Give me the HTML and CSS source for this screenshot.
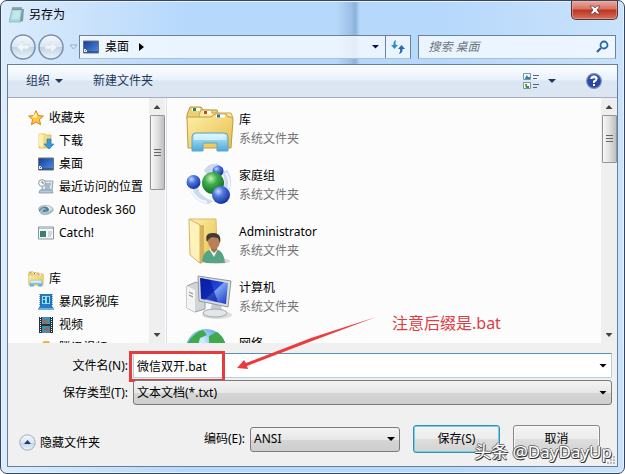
FILE: index.html
```
<!DOCTYPE html>
<html lang="zh-CN">
<head>
<meta charset="utf-8">
<title>另存为</title>
<link rel="stylesheet" href="styles.css">
</head>
<body>
<svg class="defs" aria-hidden="true">
  <defs>
    <linearGradient id="gold" x1="0" y1="0" x2="1" y2="1"><stop offset="0" stop-color="#fff0a8"/><stop offset="1" stop-color="#e6bd4c"/></linearGradient>
    <linearGradient id="aqua" x1="0" y1="0" x2="0" y2="1"><stop offset="0" stop-color="#c9effa"/><stop offset="1" stop-color="#4ba9dc"/></linearGradient>
    <linearGradient id="screen" x1="0" y1="0" x2="1" y2="1"><stop offset="0" stop-color="#0a22a8"/><stop offset=".5" stop-color="#2448d8"/><stop offset=".52" stop-color="#7ea4f6"/><stop offset="1" stop-color="#1434c4"/></linearGradient>
    <linearGradient id="desk" x1="0" y1="0" x2="1" y2="1"><stop offset="0" stop-color="#173c8c"/><stop offset="1" stop-color="#4d90ee"/></linearGradient>
    <radialGradient id="blueball" cx=".35" cy=".3" r=".7"><stop offset="0" stop-color="#c4d8ff"/><stop offset=".4" stop-color="#4f78dc"/><stop offset="1" stop-color="#1735a0"/></radialGradient>
    <radialGradient id="greenball" cx=".4" cy=".3" r=".7"><stop offset="0" stop-color="#c6f2bc"/><stop offset=".4" stop-color="#3fae4a"/><stop offset="1" stop-color="#0c6a22"/></radialGradient>
    <radialGradient id="globe" cx=".4" cy=".3" r=".8"><stop offset="0" stop-color="#d8f2ff"/><stop offset=".6" stop-color="#4a9ae0"/><stop offset="1" stop-color="#16509c"/></radialGradient>
    <linearGradient id="glass" x1="0" y1="0" x2="0" y2="1"><stop offset="0" stop-color="#f4f8fc"/><stop offset=".5" stop-color="#dbe6f2"/><stop offset=".52" stop-color="#c3d3e5"/><stop offset="1" stop-color="#edf5fb"/></linearGradient>
    <symbol id="library" viewBox="0 0 48 48">
      <path d="M1 10 4 2h11l2 3h14l1 4v5H1z" fill="#ecd078" stroke="#b9963e"/>
      <path d="M6 3h8v3H6z" fill="#fff"/><path d="M7 3h3v3H7z" fill="#2d8a3c"/>
      <path d="M13 10l2-5h9l2 3h19l2 5H13z" fill="#fae7a2" stroke="#c8a54e"/>
      <path d="M17 6h8v3h-8z" fill="#fff"/><path d="M18 6h3v3h-3z" fill="#c44523"/>
      <path d="M1 12h24l4-3h11l2 3h3q2 0 2 3l-2 28H2z" fill="url(#gold)" stroke="#c39b3c"/>
      <path d="M30 9.500h9v3h-9z" fill="#fff"/><path d="M31 9.500h3v3h-3z" fill="#2b71b8"/>
      <path d="M6 46V32q0-4 4-4h28q4 0 4 4v14H31v-8H17v8z" fill="url(#aqua)" stroke="#5ba6c8"/>
      <path d="M8 31q0-2 3-2h26q3 0 3 3v3H8z" fill="#e8faff" opacity=".65"/>
    </symbol>
    <symbol id="monitor" viewBox="0 0 16 14">
      <path d="M.5 1h15v12H.5z" fill="url(#desk)" stroke="#6a7486"/><path d="M1 11.500h14v1H1z" fill="#273a58"/><path d="M1 9h3v3H1z" fill="#e8eef8"/><path d="M2 11l2-2" stroke="#2770c0"/>
    </symbol>
  </defs>
</svg>
<main class="window">
  <header class="titlebar">
    <svg class="i16" viewBox="0 0 16 16"><path d="M4 2h11l-1 12-3 1H2z" fill="#7e9aa4"/><path d="M3 2h10l-2 13H0z" fill="#a9dbdc" stroke="#76adb2" stroke-width=".6"/><path d="M4 5h7M4 7h7M3 9h8M3 11h7" stroke="#dff4f2"/><path d="M4 0v3M6 0v3M8 0v3M10 0v3M12 0v3" stroke="#566a70"/></svg>
    <h1>另存为</h1>
    <button class="close" aria-label="关闭"><svg viewBox="0 0 12 10"><path d="M1 1h3l2 2 2-2h3L8 5l3 4H8L6 7 4 9H1l3-4z" fill="#fff" stroke="#663a42" stroke-width=".8"/></svg></button>
  </header>
  <nav class="navbar">
    <div class="history">
      <button class="round" aria-label="后退"><svg viewBox="0 0 26 26"><circle cx="13" cy="13" r="12" fill="url(#glass)" stroke="#7890aa" stroke-width="1.500"/><path d="M7 13l6-6v4h6v4h-6v4z" fill="#eef4fa" stroke="#cfdbe7" stroke-width=".6"/></svg></button>
      <button class="round" aria-label="前进"><svg viewBox="0 0 26 26"><circle cx="13" cy="13" r="12" fill="url(#glass)" stroke="#7890aa" stroke-width="1.500"/><path d="M19 13l-6-6v4H7v4h6v4z" fill="#eef4fa" stroke="#cfdbe7" stroke-width=".6"/></svg></button>
      <button class="recent" aria-label="最近的页面"><svg viewBox="0 0 9 6"><path d="M1 1h7L4.500 5z" fill="#dcebfa" stroke="#93adcb"/></svg></button>
    </div>
    <div class="address">
      <svg class="crumb-icon"><use href="#monitor"/></svg>
      <a href="#desktop">桌面</a>
      <svg class="crumb-arrow" viewBox="0 0 5 8"><path d="M0 0l5 4-5 4z"/></svg>
      <button class="drop" aria-label="以前的位置"><i class="caret"></i></button>
      <button class="refresh" aria-label="刷新"><svg viewBox="0 0 14 14"><path d="M5 0Q2 1 2.500 5H0l3.500 4L7 5H5Q4 3 5 0z" fill="#2f91c0"/><path d="M8 14q4-1 3.500-5H14l-3.500-4L7 9h2q1 2-1 5z" fill="#2868ae"/></svg></button>
    </div>
    <div class="search">
      <input type="search" placeholder="搜索 桌面" aria-label="搜索 桌面">
      <svg viewBox="0 0 13 13"><circle cx="8" cy="5" r="3.500" fill="#eef7ff" stroke="#2868ad" stroke-width="1.800"/><path d="M5 8l-4 4" stroke="#2e5d9c" stroke-width="2.200"/></svg>
    </div>
  </nav>
  <section class="client">
    <div class="toolbar">
      <button>组织 <i class="caret"></i></button>
      <button>新建文件夹</button>
      <span class="grow"></span>
      <button class="views" aria-label="更改您的视图"><svg viewBox="0 0 16 16"><path d="M.5.5h7v6h-7zM.5 9.500h7v6h-7z" fill="#eefaf5" stroke="#82939f"/><path d="M2 5l2-3 1 2h2v2H2z" fill="#3182ae"/><path d="M2 11h2v2h2v2H3z" fill="#478d35"/><path d="M10 2.500h6M10 5.500h4M10 11.500h6M10 14.500h4" stroke="#566777"/></svg><i class="caret"></i></button>
      <button class="help" aria-label="获取帮助"><svg viewBox="0 0 16 16"><circle cx="8" cy="8" r="7.400" fill="#2947a5" stroke="#8295ba" stroke-width="1.200"/><path d="M3 6Q8-1 13 6z" fill="#7896d8"/><path d="M5.500 6Q5.500 3.500 8 3.500T10.500 6Q10.500 7.500 8 8.500V10" fill="none" stroke="#fff" stroke-width="1.900"/><path d="M7 11h2v2H7z" fill="#fff"/></svg></button>
    </div>
    <div class="browser">
      <aside class="tree">
        <a class="root" href="#favorites"><svg viewBox="0 0 16 16"><path d="M8 .7l2.100 4.800 5.300.5-4 3.500 1.200 5.200L8 12l-4.600 2.700 1.200-5.200-4-3.500 5.300-.5z" fill="#ffc740" stroke="#dd7c24"/><path d="M8 2.500l1.500 3.800L8 8 4 7z" fill="#fff2a0"/></svg>收藏夹</a>
        <a href="#downloads"><svg viewBox="0 0 16 16"><path d="M1 1h6l1 1h5v13H1z" fill="url(#gold)" stroke="#d0ac51" stroke-width=".7"/><path d="M5 2v13l-4-2V1z" fill="#fff0b3"/><path d="M9 6h4v5h3l-5 5-5-5h3z" fill="#349ae0" stroke="#2274b6" stroke-width=".6"/></svg>下载</a>
        <a href="#desktop"><svg><use href="#monitor"/></svg>桌面</a>
        <a href="#places"><svg viewBox="0 0 16 16"><path d="M5 2h10l-1 9H4z" fill="#dce7ee" stroke="#91a2b0"/><path d="M7 5h6M7 7h5M7 9h5" stroke="#6e8da5"/><path d="M2 11h12l1 3H1z" fill="#b8cad7" stroke="#778e9e" stroke-width=".7"/><circle cx="4" cy="4" r="3.400" fill="#f6f7f4" stroke="#939ba0"/><path d="M4 2v2h2" fill="none" stroke="#536a82" stroke-width=".8"/></svg>最近访问的位置</a>
        <a href="#autodesk"><svg viewBox="0 0 16 16"><path d="M0 7q1-4 8-4 6 0 8 5-4 6-10 5-4 0-4-3z" fill="#a7bec8"/><path d="M2 7q4-4 10-1-1 4-5 4-3 0-2-2 1-1 3 0 0-2-3-2-3 1-3 4Q0 9 2 7z" fill="#507f96"/><path d="M7 4q5-1 7 3-4 4-8 3 6 0 5-3-1-2-4-3z" fill="#dce9ee"/></svg>Autodesk 360</a>
        <a href="#catch"><svg viewBox="0 0 16 16"><path d="M.5 2h15v12H.5z" fill="#f3f8f9" stroke="#8b9599"/><path d="M1 2h14v2H1z" fill="#b9c5c8"/><path d="M2 6h6v6H2z" fill="#3b7d72"/><path d="M10 7h4M10 9h4M10 11h3" stroke="#afb8bb"/></svg>Catch!</a>
        <span class="space"></span>
        <a class="root" href="#libraries"><svg><use href="#library"/></svg>库</a>
        <a href="#storm"><svg viewBox="0 0 16 16"><path d="M2 0h12v12l2 3H0l2-3z" fill="#267ac2"/><path d="M2 0v12M14 0v12" stroke="#254967" stroke-dasharray="1 1"/><path d="M4 2h8v8H4z" fill="#8fe0f5"/><path d="M5 3h2v2H5zM5 6h2v3H5zM9 3h2v6H9z" fill="#126aac"/><path d="M0 14h16v2H0z" fill="#65b4e4"/></svg>暴风影视库</a>
        <a href="#videos"><svg viewBox="0 0 16 16"><path d="M1 0h14v16H1z" fill="#29313a"/><path d="M4 0h8v7H4zM4 9h8v7H4z" fill="#418eb8"/><path d="M5 2l6 3-6 2zM11 10l-6 2 6 3z" fill="#a5684c"/><path d="M2.500 0v16M13.500 0v16" stroke="#e9f0f3" stroke-dasharray="1 1"/></svg>视频</a>
        <a href="#tencent"><svg viewBox="0 0 16 16"><path d="M1 3h3l2-2h5l1 2h3v12H1z" fill="#f1b534"/></svg>腾讯视频</a>
      </aside>
      <div class="scroll tall" role="presentation"><i class="up"></i><b></b><i class="down"></i></div>
      <div class="files">
        <a href="#lib"><svg><use href="#library"/></svg><span><strong>库</strong><small>系统文件夹</small></span></a>
        <a href="#home"><svg viewBox="0 0 48 48"><path d="M4 23q0 18 19 20l4-3Q11 34 12 24zM41 9q9 13-2 29l-5-5q8-12 2-22zM34 4Q23 0 18 10l5 4q3-6 11-5z" fill="#ccd9ef"/><path d="M5 25q2 14 16 16M40 12q6 10 1 18" fill="none" stroke="#f5f8ff" stroke-width="2"/><circle cx="7.500" cy="21" r="7" fill="url(#blueball)"/><circle cx="32" cy="10" r="5.500" fill="url(#blueball)"/><circle cx="27" cy="22" r="11" fill="url(#greenball)"/><circle cx="35" cy="34" r="9" fill="url(#blueball)"/></svg><span><strong>家庭组</strong><small>系统文件夹</small></span></a>
        <a href="#admin"><svg viewBox="0 0 48 48"><ellipse cx="30" cy="44" rx="14" ry="3" fill="#d8d8d3"/><path d="M4 2h26l1 31-18 13z" fill="url(#gold)" stroke="#d7bc6c"/><path d="M3 2l11 6v38L4 38z" fill="#fff2ba" stroke="#d2b55f"/><path d="M14 8h4v37l-4 2z" fill="#d5b25b"/><path d="M16 44q1-12 13-12 9 1 10 14H20z" fill="#56a484"/><path d="M23 32l5 8 4-8z" fill="#e7f5ed"/><path d="M25 27h6v6l-3 3-3-3z" fill="#aa704d"/><ellipse cx="28" cy="24" rx="6" ry="8" fill="#b98055"/><path d="M21 25q-3-9 6-9 9 0 7 10l-2-5-6-1-3 2z" fill="#403a35"/></svg><span><strong>Administrator</strong><small>系统文件夹</small></span></a>
        <a href="#computer"><svg viewBox="0 0 48 48"><ellipse cx="31" cy="42" rx="15" ry="4" fill="#dddeda"/><path d="M1 13l9-4 9 4v23L9 39l-8-4z" fill="#d1d5d8" stroke="#989ea2"/><path d="M1 13l8 4v22l-8-4z" fill="#f3f4f4"/><path d="M3 19l4 2M3 22l4 2" stroke="#7c878e"/><path d="M26 30l9 1 1 8H24z" fill="#c5cbd0"/><ellipse cx="29" cy="40" rx="12" ry="4" fill="#e2e6e8" stroke="#a1a8ab"/><path d="M12 3l33 5-3 26-29-6z" fill="#d9dddf" stroke="#93989c"/><path d="M14 5l28 5-2 21-25-5z" fill="url(#screen)"/><path d="M15 5l9 2 8 22-17-4z" fill="#0518a0" opacity=".65"/></svg><span><strong>计算机</strong><small>系统文件夹</small></span></a>
        <a href="#network"><svg viewBox="0 0 48 48"><circle cx="20" cy="20" r="20" fill="url(#globe)"/><path d="M1 15Q8 3 17 1l4 5-7 3-2 7-6 3 1 5zM23 7l8-4q8 6 9 16l-8-3-6 3-3-6z" fill="#3eaa4b"/></svg><span><strong>网络</strong><small>系统文件夹</small></span></a>
      </div>
      <div class="scroll" role="presentation"><i class="up"></i><b></b><i class="down"></i></div>
    </div>
    <form class="form">
      <label for="name">文件名(N):</label>
      <div class="combo text"><input id="name" type="text" value="微信双开.bat"><i class="caret"></i><span class="mark"></span></div>
      <label for="type">保存类型(T):</label>
      <div class="combo"><select id="type"><option>文本文档(*.txt)</option></select><i class="caret"></i></div>
      <div class="actions">
        <button type="button" class="hide"><svg viewBox="0 0 17 17"><circle cx="8.500" cy="8.500" r="7.700" fill="url(#glass)" stroke="#9dabb9"/><path d="M5 10l3.500-4 3.500 4z" fill="#20386b"/></svg>隐藏文件夹</button>
        <span class="grow"></span>
        <label for="enc">编码(E):</label>
        <div class="combo enc"><select id="enc"><option>ANSI</option></select><i class="caret"></i></div>
        <button type="button" class="push primary">保存(S)</button>
        <button type="button" class="push">取消</button>
      </div>
      <svg class="grip" viewBox="0 0 9 9"><path d="M6 1h2M3 4h2M6 4h2M0 7h2M3 7h2M6 7h2" stroke="#b9b9b9" stroke-width="2"/></svg>
    </form>
  </section>
  <svg class="arrow" viewBox="0 0 140 54"><path d="M140 1L75 22 10 47 8 44 1 52l11 1-1-3L76 25z" fill="#ec3b3c"/></svg>
  <p class="note">注意后缀是.bat</p>
  <p class="watermark">头条 @DayDayUp</p>
</main>
</body>
</html>
```

FILE: styles.css
```
* { box-sizing: border-box; }
body {
  margin: 0;
  background: #fff;
  color: #000;
  font: 12px/16px "Noto Sans", "Noto Sans CJK SC", sans-serif;
}
button, input, select { font: inherit; color: inherit; }
button { padding: 0; border: 0; background: none; }
a { color: inherit; text-decoration: none; }
svg { display: block; flex: none; }
p, h1 { margin: 0; font-weight: 400; }
.defs { position: absolute; width: 0; height: 0; }
.grow { flex: 1; }

.window {
  position: relative;
  display: flex;
  flex-direction: column;
  height: 100vh;
  padding: 0 6px 6px;
  border: 1px solid #35465e;
  border-radius: 7px;
  background:
    linear-gradient(90deg, transparent, #86aad480 60%, #78a0cdb0, transparent) 335px 0 / 24px 63px no-repeat,
    linear-gradient(90deg, #dcecfc, #b6d8fb 30%, #b6d8fb 70%, #cae2fb);
  box-shadow: inset 0 0 0 1px #e5f3ff;
  overflow: hidden;
}
.titlebar { display: flex; align-items: center; height: 28px; padding-left: 2px; }
.i16 { width: 16px; height: 16px; margin-right: 4px; }
h1 { flex: 1; font-size: 12px; line-height: 16px; }
.close {
  display: flex;
  align-items: center;
  justify-content: center;
  align-self: flex-start;
  width: 47px;
  height: 19px;
  border: 1px solid #56303b;
  border-top: 0;
  border-radius: 0 0 5px 5px;
  background: linear-gradient(#e9aaa0, #d8705e 45%, #b93420 50%, #d4715a);
  box-shadow: inset 0 0 0 1px #f0b7aa80;
}
.close svg { width: 12px; height: 10px; }

.navbar {
  display: grid;
  grid-template-columns: 69px 13fr 8fr;
  column-gap: 0;
  align-items: center;
  height: 35px;
  padding: 0 2px 0 3px;
}
.history { display: flex; align-items: center; gap: 2px; }
.round svg { width: 26px; height: 26px; }
.recent { margin-left: 3px; }
.recent svg { width: 9px; height: 6px; }
.address, .search {
  display: flex;
  align-items: center;
  height: 24px;
  min-width: 0;
  border: 1px solid #6d8197;
  border-bottom-color: #a9c0d6;
  background: #f5faffd0;
}
.address { padding-left: 3px; gap: 6px; }
.crumb-icon { width: 16px; height: 14px; }
.crumb-arrow { width: 5px; height: 8px; margin-left: 4px; }
.drop { margin-left: auto; padding: 8px 0; color: #0a1050; }
.drop .caret { display: block; }
.refresh { display: grid; place-items: center; width: 25px; align-self: stretch; border-left: 1px solid #6d8197; }
.refresh svg { width: 14px; height: 14px; }
.search { margin-left: 7px; padding: 0 6px 0 9px; }
.search input { flex: 1; width: 0; min-width: 0; padding: 0; border: 0; outline: 0; background: none; font-style: italic; }
.search input::placeholder { color: #6d7580; }
.search svg { width: 13px; height: 13px; }
.caret {
  display: inline-block;
  width: 8px;
  height: 4px;
  flex: none;
  background: currentColor;
  clip-path: polygon(0 0, 100% 0, 50% 100%);
  pointer-events: none;
}

.client { flex: 1; min-height: 0; display: flex; flex-direction: column; border: 1px solid #657f9d; background: #f0f0f0; }
.toolbar {
  display: flex;
  align-items: center;
  flex: none;
  height: 33px;
  padding: 0 15px 0 18px;
  border-bottom: 1px solid #a0afc3;
  background: linear-gradient(#fafdff, #eaf2fb 45%, #dce7f4 50%, #dce6f3);
  color: #1e395b;
}
.toolbar button { display: flex; align-items: center; gap: 5px; margin-right: 30px; }
.toolbar svg { width: 16px; height: 16px; }
.toolbar .views { gap: 9px; }
.toolbar .help { margin-right: 0; }

.browser { flex: 1; min-height: 0; display: flex; overflow: hidden; background: #fcfcfc; }
.tree { width: 141px; padding-top: 8px; flex: none; }
.tree a { display: flex; align-items: center; gap: 5px; height: 23px; padding-left: 30px; white-space: nowrap; }
.tree .root { padding-left: 20px; }
.tree svg { width: 16px; height: 16px; }
.space { display: block; height: 23px; }
.scroll { display: flex; flex-direction: column; align-items: center; width: 16px; flex: none; background: #efefef; }
.scroll i { width: 7px; height: 4px; background: #444; }
.scroll .up { margin: 7px 0 6px; clip-path: polygon(50% 0, 100% 100%, 0 100%); }
.scroll .down { margin: auto 0 6px; clip-path: polygon(0 0, 100% 0, 50% 100%); }
.scroll b {
  width: 15px;
  height: 48px;
  border: 1px solid #969696;
  border-radius: 1px;
  background:
    repeating-linear-gradient(#666 0 1px, transparent 1px 3px) 3px 50% / 7px 8px no-repeat,
    linear-gradient(90deg, #f7f7f7, #e0e0e0 50%, #bfbfbf);
}
.scroll.tall b { height: 75px; }
.files { flex: 1; margin-left: 1px; padding: 3px 0 0 19px; border-left: 1px solid #d8e1ee; }
.files a { display: flex; align-items: center; height: 56px; gap: 5px; }
.files svg { width: 48px; height: 48px; }
.files strong, .files small { display: block; font-size: 12px; font-weight: 400; line-height: 19px; }
.files small { color: #747474; }

.form {
  position: relative;
  display: grid;
  grid-template-columns: 120px 1fr;
  grid-template-rows: 25px 25px;
  align-items: center;
  flex: none;
  gap: 2px 5px;
  height: 123px;
  padding: 10px 5px 0 0;
}
.form label { text-align: right; white-space: nowrap; }
.combo {
  position: relative;
  display: flex;
  align-items: center;
  height: 25px;
  border: 1px solid #7b7b7b;
  border-radius: 3px;
  background: linear-gradient(#f3f3f3, #e7e7e7 50%, #d5d5d5 52%, #cecece);
}
.combo.text { border-color: #5690bd #b4cfe5 #b4cfe5; border-radius: 1px; background: #fff; }
.combo input, .combo select {
  flex: 1;
  min-width: 0;
  height: 22px;
  padding: 0 3px;
  border: 0;
  outline: 0;
  background: none;
  appearance: none;
}
.combo .caret { position: absolute; right: 4px; }
.mark { position: absolute; top: -3px; left: -5px; width: 96px; height: 31px; border: 3px solid #e83b3b; }
.actions { grid-column: 1 / -1; align-self: start; display: flex; align-items: center; padding: 18px 12px 0 11px; }
.hide { display: flex; align-items: center; gap: 4px; padding-top: 7px; }
.hide svg { width: 17px; height: 17px; }
.enc { width: 150px; margin: 0 13px 0 5px; }
.push {
  width: 87px;
  height: 28px;
  border: 1px solid #868686;
  border-radius: 3px;
  background: linear-gradient(#f4f4f4, #ececec 48%, #dedede 50%, #d3d3d3);
  box-shadow: inset 0 0 0 1px #fafafa;
}
.primary { margin-right: 13px; border-color: #378eb0; box-shadow: inset 0 0 0 1px #6fd1ef; }
.grip { position: absolute; right: 1px; bottom: 1px; width: 9px; height: 9px; }

.arrow { position: absolute; left: 235px; top: 315px; width: 140px; height: 54px; }
.note { position: absolute; left: 391px; top: 311px; color: #df3d43; font-size: 16px; line-height: 22px; }
.watermark {
  position: absolute;
  right: 12px;
  bottom: 8px;
  color: #fff;
  font-size: 17px;
  line-height: 26px;
  text-shadow: -1px 0 #666, 0 -1px #777, 1px 1px #333, 0 1px #333;
}
```
